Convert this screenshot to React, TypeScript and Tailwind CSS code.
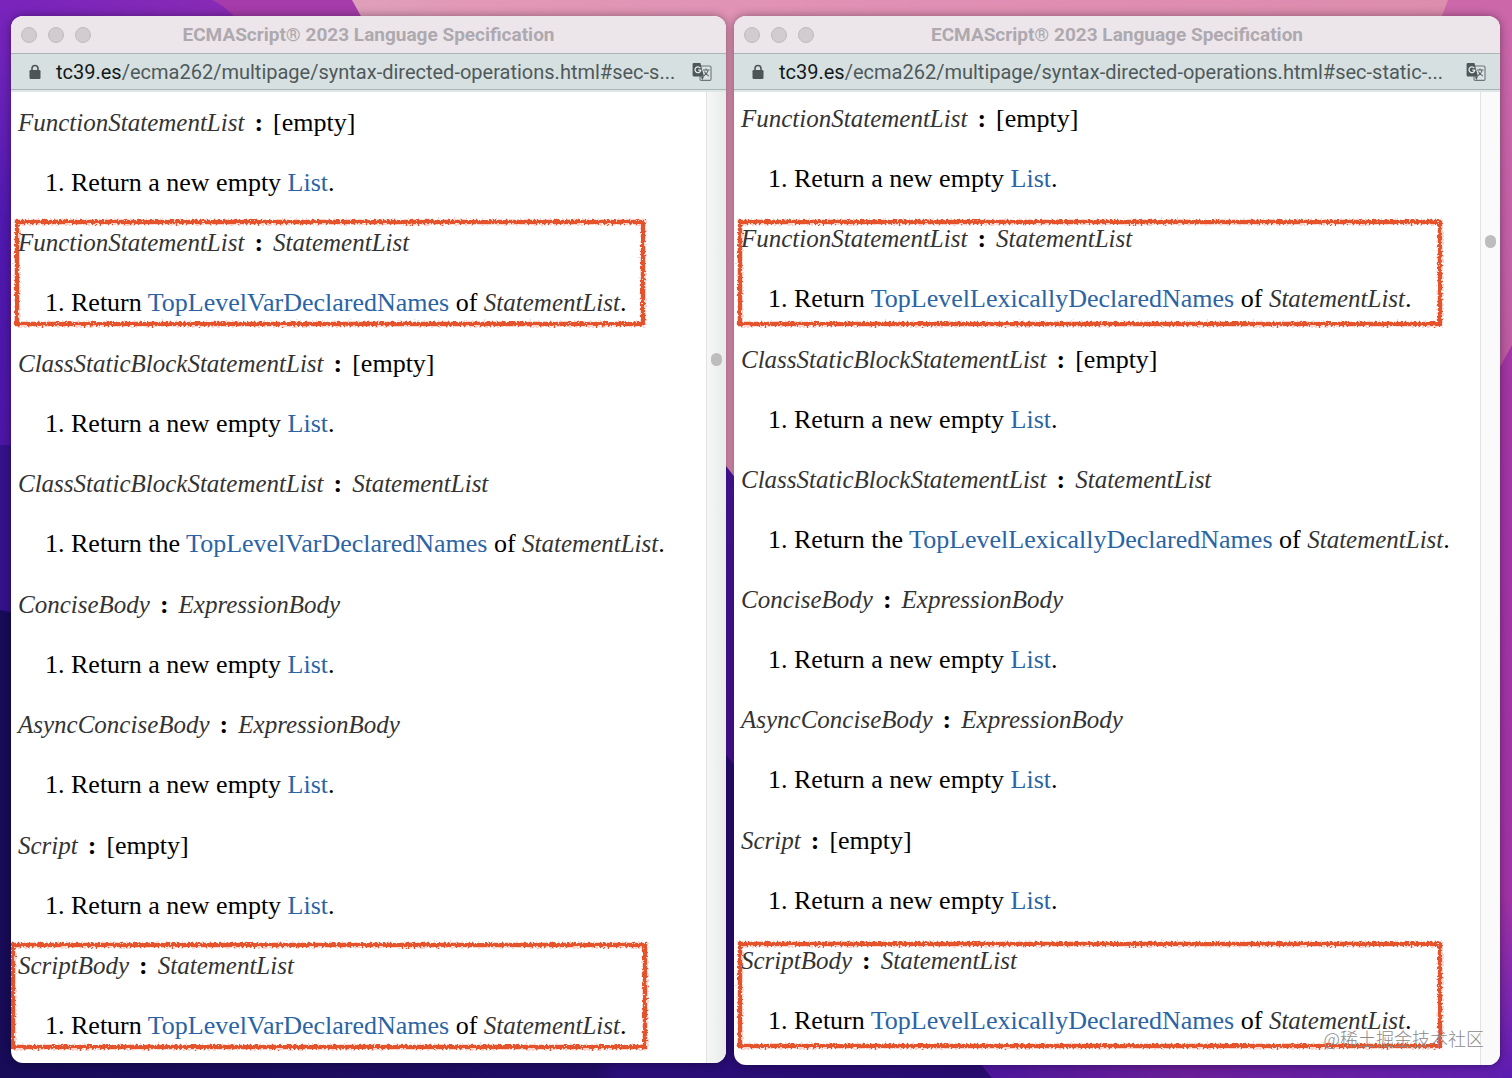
import type { ReactNode } from 'react'

// ─── Spec content ──────────────────────────────────────────────────────────

interface Rule {
  name: string
  body: string | null
  step: 'empty' | 'return' | 'return-the'
  mark?: string
}

interface Win {
  url: string
  op: string
  listPad: string
  thumb: string
  rail: string
  frame: string
  rules: Rule[]
}

function buildRules(first: string, last: string): Rule[] {
  return [
    { name: 'FunctionStatementList', body: null, step: 'empty' },
    { name: 'FunctionStatementList', body: 'StatementList', step: 'return', mark: first },
    { name: 'ClassStaticBlockStatementList', body: null, step: 'empty' },
    { name: 'ClassStaticBlockStatementList', body: 'StatementList', step: 'return-the' },
    { name: 'ConciseBody', body: 'ExpressionBody', step: 'empty' },
    { name: 'AsyncConciseBody', body: 'ExpressionBody', step: 'empty' },
    { name: 'Script', body: null, step: 'empty' },
    { name: 'ScriptBody', body: 'StatementList', step: 'return', mark: last },
  ]
}

const WINDOWS: Win[] = [
  {
    url: '/ecma262/multipage/syntax-directed-operations.html#sec-s...',
    op: 'TopLevelVarDeclaredNames',
    listPad: 'pt-[15px] pb-[21px]',
    thumb: 'top-[261px]',
    rail: 'bg-gradient-to-r from-[#f6f6f6] to-[#e9ebeb]',
    frame: 'mb-[15px]',
    rules: buildRules('-left-1 -top-2 w-[632px] h-[108px]', '-left-2 -top-2 w-[638px] h-[108px]'),
  },
  {
    url: '/ecma262/multipage/syntax-directed-operations.html#sec-static-...',
    op: 'TopLevelLexicallyDeclaredNames',
    listPad: 'pt-[11px] pb-[28px]',
    thumb: 'top-[143px]',
    rail: 'bg-[#fafafa]',
    frame: 'mb-[13px]',
    rules: buildRules('-left-1 -top-1 w-[706px] h-[108px]', '-left-1 -top-1 w-[706px] h-[108px]'),
  },
]

// ─── Pieces ────────────────────────────────────────────────────────────────

function Wallpaper() {
  return (
    <svg className="absolute inset-0 w-full h-full" viewBox="0 0 1512 1078" preserveAspectRatio="none" aria-hidden="true">
      <defs>
        <linearGradient id="base" x1="0" y1="0" x2="0" y2="1">
          <stop offset="0" stopColor="#7a24bc" />
          <stop offset="0.08" stopColor="#6a22b8" />
          <stop offset="0.2" stopColor="#5019b0" />
          <stop offset="0.6" stopColor="#4a129c" />
          <stop offset="1" stopColor="#4a1496" />
        </linearGradient>
        <linearGradient id="violet" x1="0" y1="0" x2="1" y2="0">
          <stop offset="0" stopColor="#7a24bc" />
          <stop offset="1" stopColor="#8a2cb4" />
        </linearGradient>
        <linearGradient id="pink" x1="0" y1="0" x2="1" y2="0">
          <stop offset="0" stopColor="#dfa0bb" />
          <stop offset="0.1" stopColor="#e298b6" />
          <stop offset="0.5" stopColor="#e08fb4" />
          <stop offset="1" stopColor="#dc8cac" />
        </linearGradient>
        <linearGradient id="edge" x1="0" y1="0" x2="0" y2="1">
          <stop offset="0" stopColor="#cc68aa" />
          <stop offset="1" stopColor="#bd5aa2" />
        </linearGradient>
        <linearGradient id="edgeLow" x1="0" y1="0" x2="0" y2="1">
          <stop offset="0" stopColor="#a236a4" />
          <stop offset="0.75" stopColor="#a033a4" />
          <stop offset="0.92" stopColor="#7424b0" />
          <stop offset="1" stopColor="#5c1cb0" />
        </linearGradient>
        <linearGradient id="floor" x1="0" y1="0" x2="1" y2="0">
          <stop offset="0" stopColor="#180b58" />
          <stop offset="0.6" stopColor="#200c66" />
          <stop offset="0.62" stopColor="#2a0d78" />
          <stop offset="1" stopColor="#290c70" />
        </linearGradient>
        <linearGradient id="floorRight" x1="0" y1="0" x2="1" y2="0">
          <stop offset="0" stopColor="#4a169c" />
          <stop offset="0.4" stopColor="#6a1e98" />
          <stop offset="1" stopColor="#601eb0" />
        </linearGradient>
      </defs>
      <rect width="1512" height="1078" fill="url(#base)" />
      <path d="M20 0H260V60H20Z" fill="url(#violet)" />
      <path d="M212 0H370V60H260Q240 12 212 0Z" fill="#a63bab" />
      <path d="M352 0H1512V500H740V484L726 466L362 18Z" fill="url(#pink)" />
      <path d="M1448 0H1512V400H1480L1442 16Z" fill="url(#edge)" />
      <path d="M1512 345V1078H1490V385Z" fill="url(#edgeLow)" />
      <path d="M0 445H14V620H0Z" fill="#34128c" />
      <path d="M0 610L726 755L970 1050L992 1078H0Z" fill="url(#floor)" />
      <path d="M970 1050H1502V1078H992Z" fill="url(#floorRight)" />
    </svg>
  )
}

function LockIcon() {
  return (
    <svg className="w-3 h-4 shrink-0" viewBox="0 0 12 16" aria-hidden="true">
      <path d="M3 7V4.5a3 3 0 0 1 6 0V7" fill="none" stroke="#4d5557" strokeWidth="1.6" />
      <rect x="0.5" y="6" width="11" height="9" rx="1.2" fill="#4d5557" />
    </svg>
  )
}

function TranslateIcon() {
  return (
    <svg className="w-5 h-5" viewBox="0 0 20 20" aria-hidden="true">
      <rect x="8" y="4" width="11" height="14.4" rx="1.2" fill="#dbe3e3" stroke="#6d7677" strokeWidth="1.1" />
      <path d="M1.8 1H8.4L12 14.6H2A1.4 1.4 0 0 1 .6 13.2V2.2A1.2 1.2 0 0 1 1.8 1Z" fill="#4d5658" />
      <path d="M8.8 14.6H12L10.4 18Z" fill="#4d5658" />
      <path d="M8.3 6.1A2.9 2.9 0 1 0 8.8 8.2H6.2" fill="none" stroke="#e3eaea" strokeWidth="1.3" />
      <path d="M11 8H17.5M14 6.5V8M16.3 8Q15.5 11.5 12 13.8M12.3 9.5Q14 12.5 16.8 14" fill="none" stroke="#59646a" strokeWidth="1.1" />
    </svg>
  )
}

// Hand drawn crayon frame around a rule
function Marker({ place }: { place: string }) {
  return (
    <svg className={`absolute pointer-events-none overflow-visible ${place}`} aria-hidden="true">
      <g filter="url(#crayon)">
        <rect x="3" y="3" className="w-[calc(100%-6px)] h-[calc(100%-6px)]" fill="none" stroke="#e6522c" strokeWidth="4.5" />
      </g>
    </svg>
  )
}

function CrayonFilter() {
  return (
    <svg className="absolute w-0 h-0" aria-hidden="true">
      <filter id="crayon" filterUnits="userSpaceOnUse" x="-10" y="-10" width="800" height="140">
        <feTurbulence type="fractalNoise" baseFrequency="0.5" numOctaves="2" seed="4" result="noise" />
        <feDisplacementMap in="SourceGraphic" in2="noise" scale="6" xChannelSelector="R" yChannelSelector="G" />
      </filter>
    </svg>
  )
}

function SpecLink({ children }: { children: ReactNode }) {
  return <a href="#spec" className="text-[#2a64a4]">{children}</a>
}

function Nt({ children }: { children: ReactNode }) {
  return <i className="text-[25px] text-[#333333]">{children}</i>
}

function Step({ kind, op }: { kind: Rule['step']; op: string }) {
  if (kind === 'empty') return <>Return a new empty <SpecLink>List</SpecLink>.</>
  return (
    <>
      Return {kind === 'return-the' && 'the '}
      <SpecLink>{op}</SpecLink> of <Nt>StatementList</Nt>.
    </>
  )
}

function BrowserWindow({ win }: { win: Win }) {
  return (
    <section className={`flex flex-col min-w-0 rounded-xl overflow-hidden bg-white shadow-[0_0_10px_rgba(0,0,0,0.4)] ${win.frame}`}>
      {/* Title bar */}
      <header className="grid grid-cols-[96px_1fr_96px] items-center h-[37px] bg-[#ece6eb]">
        <div className="flex gap-[11px] pl-[10px]">
          {['Close', 'Minimize', 'Zoom'].map((label) => (
            <button key={label} aria-label={label} className="w-4 h-4 rounded-full bg-[#d2ccd1] border border-[#c0babf]" />
          ))}
        </div>
        <h1 className="text-center font-['Roboto',sans-serif] text-[19px] leading-6 font-bold text-[#aea9ae] whitespace-nowrap">
          ECMAScript® 2023 Language Specification
        </h1>
      </header>

      {/* Address bar */}
      <div className="flex items-center h-[37px] pl-[18px] pr-[14px] gap-[15px] bg-[#d7e0e0] border-y border-[#a9b5b5]">
        <LockIcon />
        <p className="flex-1 min-w-0 font-['Roboto',sans-serif] text-[20px] leading-6 text-[#4f595b] whitespace-nowrap">
          <span className="text-[#14191a]">tc39.es</span>
          {win.url}
        </p>
        <button aria-label="Translate this page"><TranslateIcon /></button>
      </div>
      <div className="h-0.5 bg-[#dde7e5]" />

      {/* Page */}
      <div className="flex flex-1">
        <main className={`flex-1 flex flex-col justify-between pl-[7px] font-['Liberation_Serif',serif] text-[26px] leading-8 text-black whitespace-nowrap ${win.listPad}`}>
          {win.rules.map((rule, i) => (
            <div key={i} className="relative flex flex-col gap-7">
              <p>
                <Nt>{rule.name}</Nt>
                <b className="mx-[10px]">:</b>
                {rule.body ? <Nt>{rule.body}</Nt> : '[empty]'}
              </p>
              <ol className="list-decimal pl-[53px]">
                <li><Step kind={rule.step} op={win.op} /></li>
              </ol>
              {rule.mark && <Marker place={rule.mark} />}
            </div>
          ))}
        </main>
        <div className={`relative w-5 border-l border-[#e2e2e2] ${win.rail}`}>
          <div className={`absolute left-1 w-[11px] h-[13px] rounded-full bg-[#bdbdbd] ${win.thumb}`} />
        </div>
      </div>
    </section>
  )
}

// ─── App ───────────────────────────────────────────────────────────────────

export default function App() {
  return (
    <div className="relative min-h-screen flex font-['Inter',sans-serif]">
      <Wallpaper />
      <CrayonFilter />
      <div className="relative flex-1 grid grid-cols-[715fr_766fr] gap-2 pt-4 pl-[11px] pr-3">
        {WINDOWS.map((win) => (
          <BrowserWindow key={win.op} win={win} />
        ))}
      </div>
      <span className="absolute right-7 bottom-7 font-['Noto_Sans_CJK_SC',sans-serif] text-[18px] leading-6 font-light text-[#8a8a8a]">
        @稀土掘金技术社区
      </span>
    </div>
  )
}
